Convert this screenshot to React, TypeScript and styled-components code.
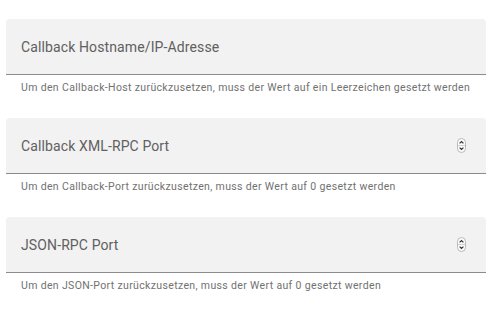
import React, { FunctionComponent } from 'react';
import styled, { createGlobalStyle } from 'styled-components';

const GlobalStyle = createGlobalStyle`
  body {
    margin: 0;
    background: #ffffff;
    font-family: Roboto, "Noto Sans", sans-serif;
  }
`;

const Form = styled.div`
  display: flex;
  flex-direction: column;
  padding: 19px 7px 0 6px;
`;

const FieldGroup = styled.div`
  display: flex;
  flex-direction: column;
  margin-bottom: 23px;
`;

const FilledField = styled.div`
  display: flex;
  align-items: center;
  justify-content: space-between;
  height: 55px;
  padding: 0 20px 0 15px;
  background: #f2f2f2;
  border-radius: 4px 4px 0 0;
  border-bottom: 1px solid #8b8b8b;
`;

const Label = styled.span`
  font-size: 14px;
  color: #606060;
  letter-spacing: 0.12px;
`;

const HelperText = styled.div`
  padding: 6px 0 0 15px;
  font-size: 10.5px;
  line-height: 14px;
  color: #717171;
  letter-spacing: 0.35px;
`;

const Spinner = () => (
  <svg width="9" height="15" viewBox="0 0 9 15">
    <rect x="0.5" y="0.5" width="8" height="14" rx="4" fill="#fbfbfb" stroke="#b9b9b9" />
    <line x1="1" y1="7.5" x2="8" y2="7.5" stroke="#cfcfcf" />
    <path d="M2.6 5.4 L4.5 3.5 L6.4 5.4" fill="none" stroke="#333" strokeWidth="1.2" />
    <path d="M2.6 9.6 L4.5 11.5 L6.4 9.6" fill="none" stroke="#333" strokeWidth="1.2" />
  </svg>
);

const TextField: FunctionComponent<{label: string, helper: string, numeric?: boolean}> = ({label, helper, numeric}) => (
  <FieldGroup>
    <FilledField>
      <Label>{label}</Label>
      {numeric && <Spinner />}
    </FilledField>
    <HelperText>{helper}</HelperText>
  </FieldGroup>
);

const App = () => (
  <>
    <GlobalStyle />
    <Form>
      <TextField
        label='Callback Hostname/IP-Adresse'
        helper='Um den Callback-Host zurückzusetzen, muss der Wert auf ein Leerzeichen gesetzt werden'
      />
      <TextField
        label='Callback XML-RPC Port'
        helper='Um den Callback-Port zurückzusetzen, muss der Wert auf 0 gesetzt werden'
        numeric
      />
      <TextField
        label='JSON-RPC Port'
        helper='Um den JSON-Port zurückzusetzen, muss der Wert auf 0 gesetzt werden'
        numeric
      />
    </Form>
  </>
);

export default App;
